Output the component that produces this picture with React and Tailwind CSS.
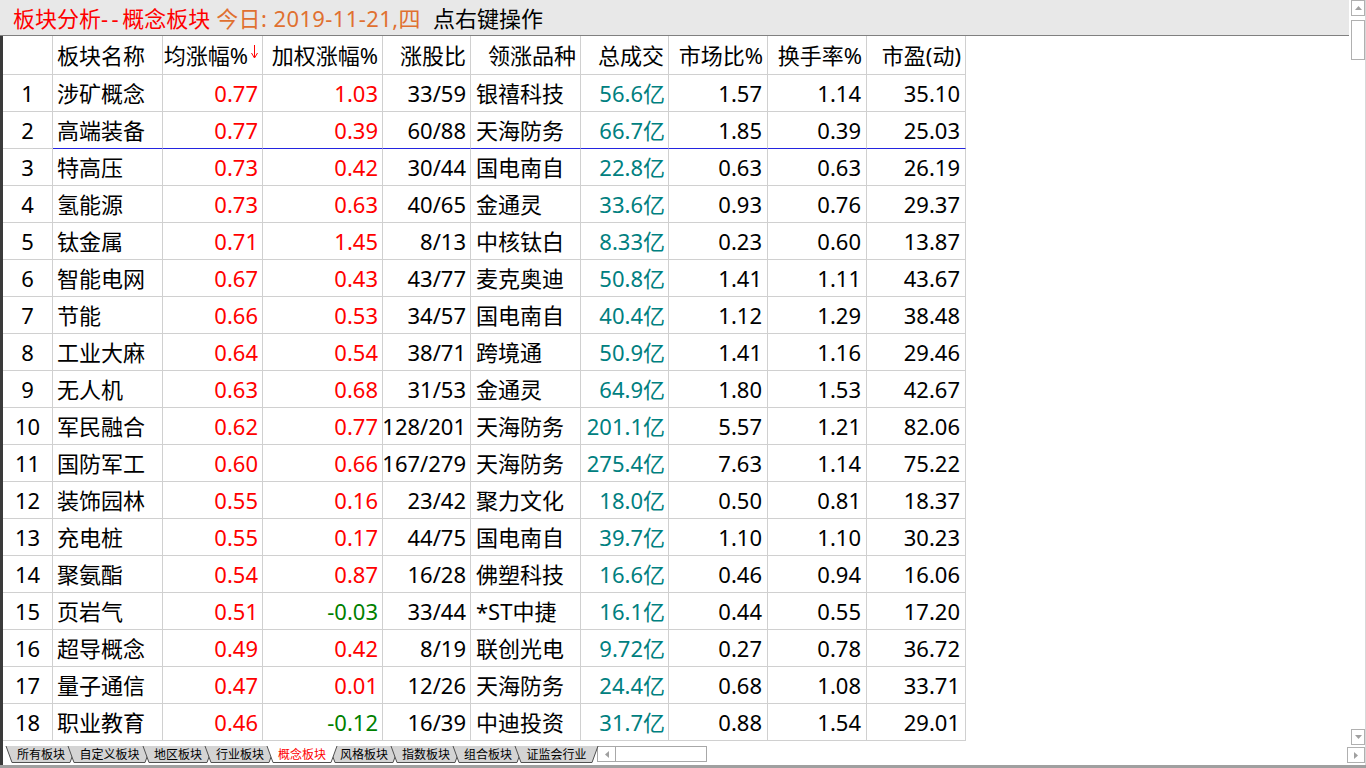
import React from "react";

const rows = [
  ["1", "涉矿概念", "0.77", "1.03", "33/59", "银禧科技", "56.6亿", "1.57", "1.14", "35.10"],
  ["2", "高端装备", "0.77", "0.39", "60/88", "天海防务", "66.7亿", "1.85", "0.39", "25.03"],
  ["3", "特高压", "0.73", "0.42", "30/44", "国电南自", "22.8亿", "0.63", "0.63", "26.19"],
  ["4", "氢能源", "0.73", "0.63", "40/65", "金通灵", "33.6亿", "0.93", "0.76", "29.37"],
  ["5", "钛金属", "0.71", "1.45", "8/13", "中核钛白", "8.33亿", "0.23", "0.60", "13.87"],
  ["6", "智能电网", "0.67", "0.43", "43/77", "麦克奥迪", "50.8亿", "1.41", "1.11", "43.67"],
  ["7", "节能", "0.66", "0.53", "34/57", "国电南自", "40.4亿", "1.12", "1.29", "38.48"],
  ["8", "工业大麻", "0.64", "0.54", "38/71", "跨境通", "50.9亿", "1.41", "1.16", "29.46"],
  ["9", "无人机", "0.63", "0.68", "31/53", "金通灵", "64.9亿", "1.80", "1.53", "42.67"],
  ["10", "军民融合", "0.62", "0.77", "128/201", "天海防务", "201.1亿", "5.57", "1.21", "82.06"],
  ["11", "国防军工", "0.60", "0.66", "167/279", "天海防务", "275.4亿", "7.63", "1.14", "75.22"],
  ["12", "装饰园林", "0.55", "0.16", "23/42", "聚力文化", "18.0亿", "0.50", "0.81", "18.37"],
  ["13", "充电桩", "0.55", "0.17", "44/75", "国电南自", "39.7亿", "1.10", "1.10", "30.23"],
  ["14", "聚氨酯", "0.54", "0.87", "16/28", "佛塑科技", "16.6亿", "0.46", "0.94", "16.06"],
  ["15", "页岩气", "0.51", "-0.03", "33/44", "*ST中捷", "16.1亿", "0.44", "0.55", "17.20"],
  ["16", "超导概念", "0.49", "0.42", "8/19", "联创光电", "9.72亿", "0.27", "0.78", "36.72"],
  ["17", "量子通信", "0.47", "0.01", "12/26", "天海防务", "24.4亿", "0.68", "1.08", "33.71"],
  ["18", "职业教育", "0.46", "-0.12", "16/39", "中迪投资", "31.7亿", "0.88", "1.54", "29.01"],
];

const tabs = [
  ["所有板块", 62],
  ["自定义板块", 75],
  ["地区板块", 62],
  ["行业板块", 62],
  ["概念板块", 62],
  ["风格板块", 62],
  ["指数板块", 62],
  ["组合板块", 62],
  ["证监会行业", 75],
];

const gridCols =
  "grid grid-cols-[50px_110px_100px_120px_88px_110px_88px_99px_99px_99px] w-[963px]";

function Tab({ label, w, active }) {
  const W = w + 8;
  return (
    <div
      className={`relative h-[17px] shrink-0 ${active ? "z-10" : ""}`}
      style={{ width: w }}
    >
      <svg
        className="absolute top-0 left-[-4px] overflow-visible"
        width={W}
        height="17"
        viewBox={`0 0 ${W} 17`}
      >
        <polygon
          points={`0,0 ${W},0 ${W - 6},17 6,17`}
          fill={active ? "#ffffff" : "#d4d4d4"}
        />
        <polyline
          points={`0,0 6,16.5 ${W - 6},16.5 ${W},0`}
          fill="none"
          stroke="#505050"
          strokeWidth="1"
        />
      </svg>
      <div
        className={`relative flex h-full items-center justify-center text-[12px] leading-none ${
          active ? "text-[#ff0000]" : "text-black"
        }`}
      >
        {label}
      </div>
    </div>
  );
}

function HeaderCell({ children, left }) {
  return (
    <div
      className={`flex h-[39px] items-center border-b border-r border-[#d0d0d0] whitespace-nowrap ${
        left ? "justify-start pl-[4px]" : "justify-end pr-[4px]"
      }`}
    >
      {children}
    </div>
  );
}

function color(v) {
  return v.startsWith("-") ? "text-[#008000]" : "text-[#ff0000]";
}

export default function App() {
  return (
    <div className="flex h-[768px] w-[1366px] flex-col overflow-hidden bg-white font-['Noto_Sans','Noto_Sans_CJK_SC',sans-serif] text-black">
      <div className="flex h-[765px] flex-row">
        {/* main area */}
        <div className="flex w-[1349px] flex-col">
          {/* title bar */}
          <div className="flex h-[36px] items-center border-b border-[#808080] bg-[#e8e8e8] pl-[13px] text-[22px] leading-none whitespace-nowrap">
            <span className="text-[#ff0000]">
              板块分析<span className="tracking-[3.5px]">--</span>概念板块
            </span>
            <span className="ml-[6px] tracking-[0.4px] text-[#e07030]">今日: 2019-11-21,四</span>
            <span className="ml-[12px] text-black">点右键操作</span>
          </div>
          <div className="flex flex-1 flex-row">
            <div className="w-[3px] bg-[#3a3a3a]" />
            <div className="flex flex-1 flex-col">
              {/* table */}
              <div className="h-[705px] text-[22px] leading-none">
                <div className={gridCols}>
                  <HeaderCell />
                  <HeaderCell left>板块名称</HeaderCell>
                  <HeaderCell>
                    <span>均涨幅%</span>
                    <svg width="7" height="14" viewBox="0 0 7 14" className="ml-[3px] mb-[6px]">
                      <line x1="3.5" y1="0" x2="3.5" y2="12" stroke="#ff0000" strokeWidth="1" />
                      <polyline points="0.5,8 3.5,13 6.5,8" fill="none" stroke="#ff0000" strokeWidth="1" />
                    </svg>
                  </HeaderCell>
                  <HeaderCell>加权涨幅%</HeaderCell>
                  <HeaderCell>涨股比</HeaderCell>
                  <HeaderCell>领涨品种</HeaderCell>
                  <HeaderCell>总成交</HeaderCell>
                  <HeaderCell>市场比%</HeaderCell>
                  <HeaderCell>换手率%</HeaderCell>
                  <HeaderCell>市盈(动)</HeaderCell>
                </div>
                {rows.map((r, i) => {
                  const line = i === 1 ? "border-b-[#2424e0]" : "border-b-[#d0d0d0]";
                  const base = `flex h-[37px] items-center border-b border-r border-r-[#d0d0d0] whitespace-nowrap min-w-0`;
                  return (
                    <div key={i} className={gridCols}>
                      <div className={`${base} border-b-[#d0d0d0] justify-center`}>{r[0]}</div>
                      <div className={`${base} ${line} justify-start pl-[4px]`}>{r[1]}</div>
                      <div className={`${base} ${line} justify-end pr-[4px] ${color(r[2])}`}>{r[2]}</div>
                      <div className={`${base} ${line} justify-end pr-[4px] ${color(r[3])}`}>{r[3]}</div>
                      <div className={`${base} ${line} justify-end pr-[4px]`}>{r[4]}</div>
                      <div className={`${base} ${line} justify-start pl-[5px]`}>{r[5]}</div>
                      <div className={`${base} ${line} justify-end pr-[3px] text-[#008080]`}>{r[6]}</div>
                      <div className={`${base} ${line} justify-end pr-[5px]`}>{r[7]}</div>
                      <div className={`${base} ${line} justify-end pr-[5px]`}>{r[8]}</div>
                      <div className={`${base} ${line} justify-end pr-[5px]`}>{r[9]}</div>
                    </div>
                  );
                })}
              </div>
              {/* tab bar */}
              <div className="flex h-[24px] flex-row items-start pt-[5px] pl-[7px]">
                {tabs.map(([l, w]) => (
                  <Tab key={l} label={l} w={w} active={l === "概念板块"} />
                ))}
                <div className="ml-[3px] flex h-[16px] w-[110px] flex-row border border-[#a8a8a8] bg-white">
                  <div className="flex w-[18px] items-center justify-center border-r border-[#a8a8a8]">
                    <svg width="4" height="7" viewBox="0 0 4 7">
                      <polygon points="4,0 0,3.5 4,7" fill="#a0a0a0" />
                    </svg>
                  </div>
                </div>
              </div>
            </div>
          </div>
        </div>
        {/* vertical scrollbar */}
        <div className="flex w-[16px] flex-col items-end">
          <div className="flex h-[16px] w-[14px] items-center justify-center border border-[#b0b0b0] bg-white">
            <svg width="7" height="4" viewBox="0 0 7 4">
              <polygon points="0,4 3.5,0 7,4" fill="#a0a0a0" />
            </svg>
          </div>
          <div className="mt-[4px] h-[40px] w-[14px] border border-[#b0b0b0] bg-white" />
          <div className="flex-1" />
          <div className="flex h-[16px] w-[14px] items-center justify-center border border-[#b0b0b0] bg-white">
            <svg width="7" height="4" viewBox="0 0 7 4">
              <polygon points="0,0 7,0 3.5,4" fill="#a0a0a0" />
            </svg>
          </div>
          <div className="mt-[2px] mb-[2px] flex h-[16px] w-[18px] items-center justify-center border border-[#b0b0b0] bg-white">
            <svg width="4" height="7" viewBox="0 0 4 7">
              <polygon points="0,0 4,3.5 0,7" fill="#a0a0a0" />
            </svg>
          </div>
        </div>
        <div className="w-[1px] bg-[#d8d8d8]" />
      </div>
      <div className="h-[3px] bg-[#a0a0a0]" />
    </div>
  );
}
